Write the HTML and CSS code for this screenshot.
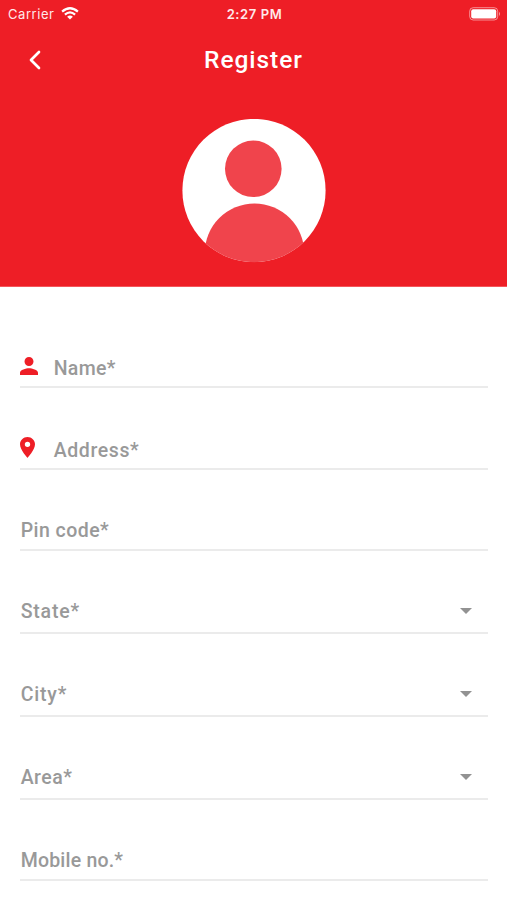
FILE: index.html
```html
<!DOCTYPE html>
<html lang="en">
<head>
<meta charset="utf-8">
<title>Register</title>
<link rel="stylesheet" href="styles.css">
</head>
<body>
<header class="hero">
  <div class="status">
    <div class="carrier"><span>Carrier</span>
      <svg class="wifi" viewBox="0 0 18 13" fill="none" stroke="currentColor" stroke-width="2.2"><path d="M1.1 4.7Q9-2.2 16.9 4.7M3.9 7.6Q9 3.2 14.1 7.6"/><path d="M6.1 9.7Q9 7.3 11.9 9.7L9 12.6Z" fill="currentColor" stroke="none"/></svg>
    </div>
    <time class="clock">2:27 PM</time>
    <svg class="battery" viewBox="0 0 32 14"><rect x=".7" y=".7" width="28" height="12.3" rx="3.5" fill="none" stroke="#fff" stroke-opacity=".5"/><rect x="2.2" y="2.3" width="25" height="9.2" rx="2" fill="#fff"/><path d="M30 4.7q2 2 0 4.4z" fill="#fff" opacity=".55"/></svg>
  </div>
  <nav class="bar">
    <svg class="back" viewBox="0 0 12 20"><path d="M10 2L2 10L10 18" fill="none" stroke="#fff" stroke-width="2.7" stroke-linecap="round" stroke-linejoin="round"/></svg>
    <h1 class="title">Register</h1>
  </nav>
  <svg class="avatar" viewBox="0 0 144 144"><defs><clipPath id="disc"><circle cx="72" cy="71.5" r="71.7"/></clipPath></defs><circle cx="72" cy="71.5" r="71.6" fill="#fff"/><g fill="#f0444c" clip-path="url(#disc)"><circle cx="71.3" cy="49.8" r="28.3"/><circle cx="72.5" cy="134.3" r="49.8"/></g></svg>
</header>
<main class="form">
  <div class="field first">
    <svg class="icon person" viewBox="4 4 16 16" preserveAspectRatio="none"><path d="M12 12c2.21 0 4-1.79 4-4s-1.79-4-4-4-4 1.79-4 4 1.79 4 4 4zm0 2c-2.67 0-8 1.34-8 4v2h16v-2c0-2.66-5.33-4-8-4z"/></svg>
    <span class="label name">Name*</span>
  </div>
  <div class="field second">
    <svg class="icon pin" viewBox="5 2 14 20" preserveAspectRatio="none"><path d="M12 2C8.13 2 5 5.13 5 9c0 5.25 7 13 7 13s7-7.75 7-13c0-3.87-3.13-7-7-7zm0 9.5a2.5 2.5 0 0 1 0-5 2.5 2.5 0 0 1 0 5z"/></svg>
    <span class="label address">Address*</span>
  </div>
  <div class="field third"><span class="label code">Pin code*</span></div>
  <div class="field select"><span class="label state">State*</span><svg class="caret" viewBox="0 0 12 6"><path d="M0 0H12L6 6Z"/></svg></div>
  <div class="field select"><span class="label city">City*</span><svg class="caret" viewBox="0 0 12 6"><path d="M0 0H12L6 6Z"/></svg></div>
  <div class="field select"><span class="label area">Area*</span><svg class="caret" viewBox="0 0 12 6"><path d="M0 0H12L6 6Z"/></svg></div>
  <div class="field last"><span class="label mobile">Mobile no.*</span></div>
</main>
</body>
</html>
```
FILE: styles.css
```css
* { box-sizing: border-box; }
body { margin: 0; height: 900px; overflow: hidden; background: #fff; font-family: Roboto, "Liberation Sans", sans-serif; }
svg { display: block; flex: none; }
.hero { height: 287px; background: #ee1e26; color: #fff; border-bottom: 1px solid #f4565b; }
.status { height: 28px; padding: 0 6px 0 8px; display: grid; grid-template-columns: 1fr auto 1fr; align-items: center; font-family: Inter, sans-serif; font-size: 13px; line-height: 16px; }
.carrier { display: flex; align-items: center; gap: 7px; color: #ffe9ea; letter-spacing: .55px; }
.wifi { width: 18px; height: 13px; margin-bottom: 1px; color: #fff; }
.clock { font-weight: 600; color: #ffe9ea; letter-spacing: .6px; }
.battery { width: 32px; height: 14px; margin-bottom: 1px; justify-self: end; }
.bar { height: 64px; padding: 0 29px; display: grid; grid-template-columns: 12px 1fr 12px; align-items: center; }
.back { width: 12px; height: 20px; }
.title { margin: 0; text-align: center; font-size: 24.5px; line-height: 30px; font-weight: 500; letter-spacing: .95px; }
.avatar { width: 144px; height: 144px; margin: 27px auto 0 182px; }
.form { padding: 0 19px 0 20px; }
.field { display: flex; align-items: flex-end; height: 83px; padding-bottom: 7px; border-bottom: 2px solid #ebebeb; }
.first { height: 101px; padding-bottom: 6px; }
.second { height: 82px; padding-bottom: 6px; }
.third { height: 81px; }
.select { padding-bottom: 9px; }
.last { height: 81px; }
.icon { fill: #ee1e26; }
.person { width: 18px; height: 18px; margin: 0 15px 5px 0; }
.pin { width: 15px; height: 21px; margin: 0 18px 4px 0; }
.label { padding-left: .7px; color: #999; font-size: 19.5px; line-height: 22px; font-weight: 500; letter-spacing: .3px; }
.address { letter-spacing: .6px; }
.code { letter-spacing: .45px; }
.state { letter-spacing: .8px; }
.city { letter-spacing: .8px; }
.area { letter-spacing: .5px; }
.mobile { letter-spacing: .2px; }
.caret { width: 12px; height: 6px; margin: 0 16px 9px auto; fill: #929292; }
```
